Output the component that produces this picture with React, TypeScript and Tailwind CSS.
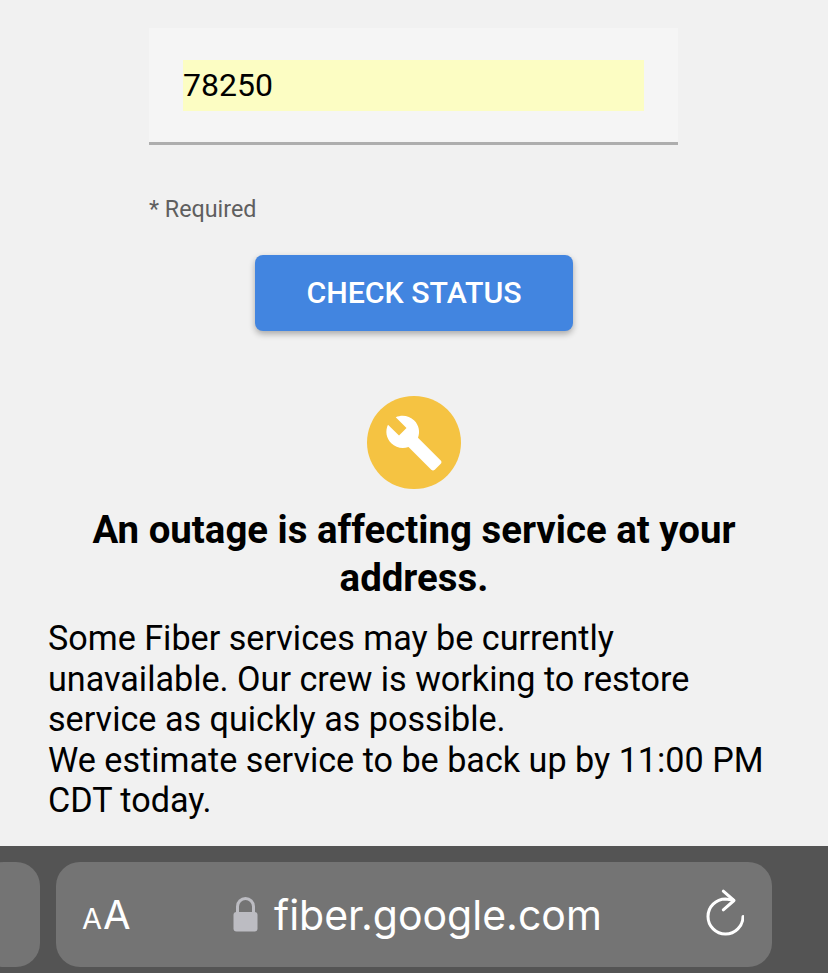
import { MdBuild } from 'react-icons/md';

export default function App() {
  return (
    <div className="flex h-[973px] w-[828px] flex-col overflow-hidden bg-[#f1f1f1] font-['Roboto',sans-serif]">
      <main className="flex h-[846px] flex-col px-[48px] pt-[28px]">
        {/* Zip field */}
        <div className="ml-[101px] h-[117px] w-[529px] border-b-[3px] border-[#aeaeae] bg-[#f5f5f5] px-[34px] pt-[32px]">
          <div className="flex h-[51px] w-[461px] items-center bg-[#fcfdc3] pb-[2px] text-[32px] text-black">78250</div>
        </div>
        <p className="ml-[101px] mt-[50px] text-[23.300px] leading-[28px] text-[#5f5f5f]">* Required</p>

        <button className="mx-auto mt-[32px] flex h-[76px] w-[318px] shrink-0 items-center justify-center rounded-[8px] bg-[#4285e0] text-[30.300px] font-medium text-white shadow-[0_3px_6px_rgba(0,0,0,0.3)]">
          CHECK STATUS
        </button>

        {/* Outage status */}
        <div className="mx-auto mt-[65px] flex h-[93px] w-[94px] shrink-0 items-center justify-center rounded-full bg-[#f5c342]">
          <MdBuild className="h-[60px] w-[60px] text-white" />
        </div>
        <h1 className="mt-[17px] text-center text-[38.400px] leading-[48px] font-bold text-black">
          An outage is affecting service at your address.
        </h1>
        <p className="mt-[16px] text-[34.150px] leading-[40.6px] text-black">
          Some Fiber services may be currently unavailable. Our crew is working to restore service as quickly as possible.
          <br />
          We estimate service to be back up by 11:00 PM CDT today.
        </p>
      </main>

      {/* Safari bottom bar */}
      <footer className="flex flex-1 gap-[16px] bg-[#545454] pt-[16px] font-['Inter',sans-serif] text-white">
        <div className="-ml-[20px] h-[105px] w-[60px] shrink-0 rounded-[24px] bg-[#747474]" />
        <div className="flex h-[105px] w-[716px] shrink-0 items-center rounded-[24px] bg-[#747474] pr-[28px] pl-[26px]">
          <span className="flex w-[151px] items-baseline gap-[1px] font-normal">
            <span className="text-[29px]">A</span>
            <span className="text-[40px]">A</span>
          </span>
          <svg viewBox="0 0 25 36" className="h-[36px] w-[25px] fill-[#bcbcc2]">
            <path d="M4.500 16V9.500a8 8 0 0 1 16 0V16" className="fill-none stroke-[#bcbcc2] stroke-[3]" />
            <rect x="0.500" y="15" width="24" height="19.500" rx="3" />
          </svg>
          <span className="mt-[2px] ml-[16px] text-[41px] leading-none font-normal">fiber.google.com</span>
          <svg viewBox="0 0 38 52" className="ml-auto h-[52px] w-[38px] fill-none stroke-white stroke-[3]">
            <path d="M37 27.500A17.500 17.500 0 1 1 19.500 10L27 11" strokeLinecap="round" />
            <path d="M17.300 2.200 L28 11.500 L17.300 20.800" strokeLinecap="round" strokeLinejoin="round" />
          </svg>
        </div>
      </footer>
    </div>
  );
}
